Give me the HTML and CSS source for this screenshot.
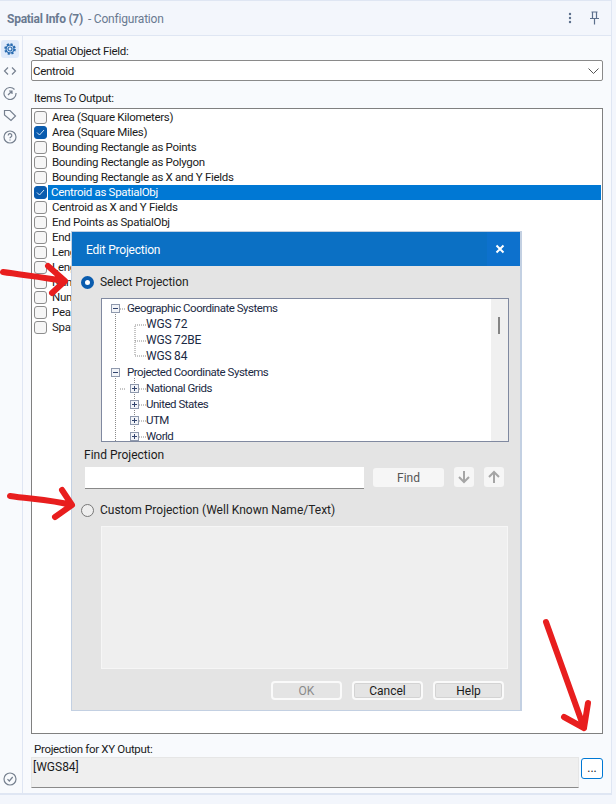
FILE: index.html
```html
<!DOCTYPE html>
<html lang="en">
<head>
<meta charset="utf-8">
<title>Spatial Info (7) - Configuration</title>
<link rel="stylesheet" href="styles.css">
</head>
<body>
<div class="panel">
  <header class="header">
    <div class="title"><strong>Spatial Info (7)</strong><span class="sub">- Configuration</span></div>
    <div class="header-actions">
      <svg class="ico-more" width="4" height="12" viewBox="0 0 4 12"><circle cx="2" cy="2" r="1.2"/><circle cx="2" cy="6" r="1.2"/><circle cx="2" cy="10" r="1.2"/></svg>
      <svg class="ico-pin" width="11" height="14" viewBox="0 0 11 14"><path d="M2.500 1h6M3.500 1v6M7.500 1v6M1 7.500h9M5.500 8v5.500"/></svg>
    </div>
  </header>
  <div class="body">
    <nav class="side">
      <div class="side-top">
        <span class="tile active"><svg width="14" height="14" viewBox="0 0 14 14"><circle cx="7" cy="7" r="2"/><circle cx="7" cy="7" r="4.600" stroke-width="2.400" stroke-dasharray="2 1.610"/><circle cx="7" cy="7" r="4"/></svg></span>
        <span class="tile"><svg width="14" height="14" viewBox="0 0 14 14"><path d="M5 3.500 1.500 7 5 10.500M9 3.500 12.500 7 9 10.500"/></svg></span>
        <span class="tile"><svg width="14" height="14" viewBox="0 0 14 14"><path d="M11.500 3.500A6 6 0 1 0 13 7M5 9l4-4M6 5h3v3"/></svg></span>
        <span class="tile"><svg width="14" height="14" viewBox="0 0 14 14"><path d="M1.500 2.500h5.500l5.500 5.500-4.500 4.500-6.500-5.500z"/></svg></span>
        <span class="tile"><svg width="14" height="14" viewBox="0 0 14 14"><circle cx="7" cy="7" r="6"/><path d="M5.200 5.500a1.800 1.800 0 1 1 2.700 1.500c-.6.400-.9.700-.9 1.300M7 9.600v1"/></svg></span>
      </div>
      <span class="tile"><svg width="14" height="14" viewBox="0 0 14 14"><circle cx="7" cy="7" r="6"/><path d="M4.500 7.200 6.300 9l3.400-4"/></svg></span>
    </nav>
    <main class="content">
      <label class="lbl first">Spatial Object Field:</label>
      <div class="select"><span>Centroid</span><svg width="11" height="6" viewBox="0 0 11 6"><path d="M.5.500 5.500 5.500 10.500.500"/></svg></div>
      <label class="lbl second">Items To Output:</label>
      <ul class="list">
        <li class="item"><i class="cb"></i><span>Area (Square Kilometers)</span></li>
        <li class="item"><i class="cb on"><svg width="9" height="7" viewBox="0 0 9 7"><path d="M1 3.500 3.500 6 8 1"/></svg></i><span>Area (Square Miles)</span></li>
        <li class="item"><i class="cb"></i><span>Bounding Rectangle as Points</span></li>
        <li class="item"><i class="cb"></i><span>Bounding Rectangle as Polygon</span></li>
        <li class="item"><i class="cb"></i><span>Bounding Rectangle as X and Y Fields</span></li>
        <li class="item selected"><i class="cb on"><svg width="9" height="7" viewBox="0 0 9 7"><path d="M1 3.500 3.500 6 8 1"/></svg></i><span>Centroid as SpatialObj</span></li>
        <li class="item"><i class="cb"></i><span>Centroid as X and Y Fields</span></li>
        <li class="item"><i class="cb"></i><span>End Points as SpatialObj</span></li>
        <li class="item"><i class="cb"></i><span>End Points as X and Y Fields</span></li>
        <li class="item"><i class="cb"></i><span>Length (Kilometers)</span></li>
        <li class="item"><i class="cb"></i><span>Length (Miles)</span></li>
        <li class="item"><i class="cb"></i><span>Number of Parts</span></li>
        <li class="item"><i class="cb"></i><span>Number of Points</span></li>
        <li class="item"><i class="cb"></i><span>Peak Value</span></li>
        <li class="item"><i class="cb"></i><span>Spatial Object</span></li>
      </ul>
      <label class="lbl third">Projection for XY Output:</label>
      <div class="xy-row">
        <div class="xy-field">[WGS84]</div>
        <button class="dots">...</button>
      </div>
    </main>
  </div>
</div>

<section class="dialog">
  <div class="dlg-title"><span class="dlg-name">Edit Projection</span><span class="dlg-x"><svg width="10" height="10" viewBox="0 0 10 10"><path d="M1.500 1.500l7 7M8.500 1.500l-7 7"/></svg></span></div>
  <div class="dlg-body">
    <div class="radio-row r1"><i class="radio on"></i><span>Select Projection</span></div>
    <div class="tree">
      <svg class="tree-lines" width="80" height="142" viewBox="0 0 80 142">
        <path d="M13.500 14V62M13.500 78V142M32.500 78V142M33 26V56H44M33 41H44M33 25H44M18 9H24M18 89H24M37 89H44M37 105H44M37 121H44M37 137H44"/>
      </svg>
      <div class="tree-row l0"><i class="exp minus"></i><span>Geographic Coordinate Systems</span></div>
      <div class="tree-row l1"><span>WGS 72</span></div>
      <div class="tree-row l1"><span>WGS 72BE</span></div>
      <div class="tree-row l1"><span>WGS 84</span></div>
      <div class="tree-row l0"><i class="exp minus"></i><span>Projected Coordinate Systems</span></div>
      <div class="tree-row l1 has"><i class="exp plus"></i><span>National Grids</span></div>
      <div class="tree-row l1 has"><i class="exp plus"></i><span>United States</span></div>
      <div class="tree-row l1 has"><i class="exp plus"></i><span>UTM</span></div>
      <div class="tree-row l1 has"><i class="exp plus"></i><span>World</span></div>
      <div class="scrollbar"><i class="thumb"></i></div>
    </div>
    <div class="find-lbl">Find Projection</div>
    <div class="find-row">
      <div class="find-input"></div>
      <button class="btn-find">Find</button>
      <button class="btn-arrow"><svg width="14" height="14" viewBox="0 0 14 14"><path d="M7 1v11M2 7l5 5 5-5"/></svg></button>
      <button class="btn-arrow"><svg width="14" height="14" viewBox="0 0 14 14"><path d="M7 13V2M2 7l5-5 5 5"/></svg></button>
    </div>
    <div class="radio-row r2"><i class="radio"></i><span>Custom Projection (Well Known Name/Text)</span></div>
    <div class="wkt"></div>
    <div class="dlg-actions">
      <button class="btn disabled">OK</button>
      <button class="btn">Cancel</button>
      <button class="btn">Help</button>
    </div>
  </div>
</section>

<svg class="marks" width="616" height="804" viewBox="0 0 616 804">
  <path d="M3 272C22 275 44 277 64 281M48 266 65 281 52 293"/>
  <path d="M10 496C30 499 52 500 71 505M62 490 72 505 55 517"/>
  <path d="M546 622 584 728M564 717 584 728 588 703"/>
</svg>
</body>
</html>
```
FILE: styles.css
```css
* { box-sizing: border-box; }
html, body { margin: 0; padding: 0; }
body {
  width: 616px; height: 804px; overflow: hidden; position: relative;
  background: #f3f6fc;
  font-family: Roboto, "Open Sans", sans-serif;
  font-size: 12px; color: #1b1b1b;
}
.panel {
  width: 612px; height: 795px; display: flex; flex-direction: column;
  border-top: 1px solid #dfe6f3; border-right: 1px solid #dfe6f3; border-bottom: 2px solid #dfe6f3;
  background: #f8fafd;
}
.header {
  height: 35px; flex: none; display: flex; align-items: center; justify-content: space-between;
  padding: 1px 11px 0 7px; background: #f3f6fc; border-bottom: 1px solid #dfe6f3;
  color: #6a7a91; font-size: 12px;
}
.title strong { font-weight: 700; letter-spacing: -.25px; }
.title .sub { margin-left: 5px; letter-spacing: -.2px; }
.header-actions { display: flex; align-items: center; gap: 17px; margin-top: -2px; }
.ico-more { fill: #5c6f8c; }
.ico-pin { fill: none; stroke: #5c6f8c; stroke-width: 1.200; }
.body { flex: 1; display: flex; min-height: 0; }
.side {
  width: 23px; flex: none; display: flex; flex-direction: column; justify-content: space-between;
  border-right: 1px solid #dfe6f3; padding: 4px 0 5px 1px;
}
.side-top { display: flex; flex-direction: column; gap: 4px; }
.tile { width: 18px; height: 18px; display: flex; align-items: center; justify-content: center; border-radius: 3px; }
.tile svg { fill: none; stroke: #76808f; stroke-width: 1.200; }
.tile.active { background: #dfeafa; }
.tile.active svg { stroke: #2a6cb0; }
.content { flex: 1; padding: 0 8px 0 8px; min-width: 0; display: flex; flex-direction: column; }
.lbl { display: block; height: 14px; line-height: 14px; padding-left: 3px; font-size: 11.500px; white-space: nowrap; letter-spacing: -.32px; }
.lbl.first { margin-top: 8px; }
.lbl.second { margin-top: 10px; }
.lbl.third { margin-top: 8px; }
.select {
  margin-top: 2px; height: 21px; display: flex; align-items: center; justify-content: space-between;
  background: #fff; border: 1px solid #8a8a8a; border-radius: 2px; padding: 0 3px 0 1px;
  font-size: 11.500px; letter-spacing: -.3px;
}
.select svg { fill: none; stroke: #555; stroke-width: 1; }
.list {
  list-style: none; margin: 3px 0 0; padding: 1px; height: 626px; background: #fff; border: 1px solid #808080; flex: none;
}
.item { height: 15px; display: flex; align-items: center; padding-left: 1px; white-space: nowrap; line-height: 15px; font-size: 11.500px; letter-spacing: -.3px; }
.cb {
  width: 13px; height: 13px; flex: none; display: flex; align-items: center; justify-content: center;
  background: #f6f6f6; border: 1px solid #8d8d8d; border-radius: 3px; margin-right: 5px;
}
.cb.on { background: #0a5cae; border-color: #0a5cae; }
.cb svg { fill: none; stroke: #cfe0f3; stroke-width: 1; }
.item.selected span { background: #0078d4; color: #fff; flex: 1; height: 15px; margin-left: -4px; padding-left: 3px; }
.xy-row { display: flex; gap: 2px; align-items: flex-start; margin-top: 1px; padding-left: 0; }
.xy-field {
  width: 548px; height: 31px; background: #efefef; border: 1px solid #e6e6e6; border-bottom-color: #8a8a8a;
  padding: 2px 1px; line-height: 14px;
}
.dots {
  width: 22px; height: 21px; margin-top: 1px; padding: 0 0 2px; background: #fff; border: 1px solid #0078d4; border-radius: 3px;
  font: 12px Roboto, sans-serif; color: #222; line-height: 14px;
}
.dialog {
  position: absolute; left: 71px; top: 231px; width: 451px; height: 480px;
  background: #e4e4e4; border: 1px solid #c3d0e2; border-width: 1px 2px 1px 1px;
  display: flex; flex-direction: column;
}
.dlg-title {
  height: 34px; flex: none; background: #0b70c4; color: #fff; display: flex; align-items: center; justify-content: space-between;
  padding-left: 14px; font-size: 12px; letter-spacing: -.22px;
}
.dlg-name { padding-top: 2px; }
.dlg-x { width: 33px; height: 34px; background: #0d71cd; display: flex; align-items: center; justify-content: center; padding-right: 8px; }
.dlg-x svg { fill: none; stroke: #fff; stroke-width: 2; }
.dlg-body { flex: 1; padding: 0 0 0 9px; display: flex; flex-direction: column; }
.radio-row { display: flex; align-items: center; font-size: 12px; height: 16px; }
.radio-row span { color: #222; }
.radio-row.r1 { margin-top: 8px; }
.radio-row.r1 span { letter-spacing: -.1px; }
.radio-row.r2 { margin-top: 13px; }
.radio { width: 13px; height: 13px; border-radius: 50%; margin-right: 6px; background: #eee; border: 1px solid #777; flex: none; }
.radio.on { background: #fff; border: 4px solid #0a5cae; }
.tree {
  position: relative; width: 408px; height: 144px; margin: 8px 0 0 20px; background: #fff; border: 1px solid #8089a0; overflow: hidden; padding-top: 1px;
}
.tree-lines { position: absolute; left: 0; top: 1px; fill: none; stroke: #8a8a8a; stroke-width: 1; stroke-dasharray: 1 1; }
.tree-row { position: relative; height: 16px; line-height: 16px; white-space: nowrap; color: #1b2a44; display: flex; align-items: center; letter-spacing: -.2px; }
.tree-row.l0, .tree-row.has { font-size: 11.500px; letter-spacing: -.48px; }
.tree-row.l0 { padding-left: 9px; }
.tree-row.l1 { padding-left: 44px; }
.tree-row.has { padding-left: 28px; }
.exp {
  position: relative; width: 9px; height: 9px; flex: none; margin-right: 7px; background: #f2f4f8; border: 1px solid #8f99ad;
}
.exp::before { content: ""; position: absolute; left: 1px; right: 1px; top: 3px; height: 1px; background: #33456e; }
.exp.plus::after { content: ""; position: absolute; top: 1px; bottom: 1px; left: 3px; width: 1px; background: #33456e; }
.scrollbar { position: absolute; right: 0; top: 0; bottom: 0; width: 17px; background: #f0f0f0; }
.thumb { position: absolute; left: 7px; top: 18px; width: 2px; height: 17px; background: #858585; }
.find-lbl { margin: 5px 0 0 3px; height: 16px; line-height: 16px; color: #1b1b1b; }
.find-row { display: flex; margin: 4px 0 0 4px; align-items: flex-start; }
.find-input { width: 279px; height: 22px; background: #fff; border-bottom: 1px solid #888; }
.btn-find {
  width: 71px; height: 19px; margin: 1px 0 0 9px; background: #f6f6f6; border: 0; border-radius: 3px; padding: 0;
  font: 12px Roboto, sans-serif; color: #555;
}
.btn-arrow { width: 20px; height: 20px; margin-left: 10px; background: #f6f6f6; border: 0; border-radius: 3px; padding: 3px; display: flex; }
.btn-find + .btn-arrow { margin-left: 10px; }
.btn-arrow svg { fill: none; stroke: #a5a5a5; stroke-width: 2; }
.wkt { width: 407px; height: 143px; margin: 8px 0 0 20px; background: #efefef; border: 1px solid #f6f6f6; }
.dlg-actions { display: flex; gap: 10px; margin: 12px 0 0 190px; }
.btn {
  width: 71px; height: 19px; padding: 1px 0 0; background: #e4e4e4; border: 2px solid #fafafa; border-radius: 4px; box-shadow: 0 0 0 1px #d3d3d3 inset;
  font: 12px Roboto, sans-serif; color: #1b1b1b; line-height: 13px;
}
.btn.disabled { color: #8a8a8a; box-shadow: none; }
.marks { position: absolute; left: 0; top: 0; fill: none; stroke: #e81e1e; stroke-width: 6; stroke-linecap: round; stroke-linejoin: round; pointer-events: none; }
```
